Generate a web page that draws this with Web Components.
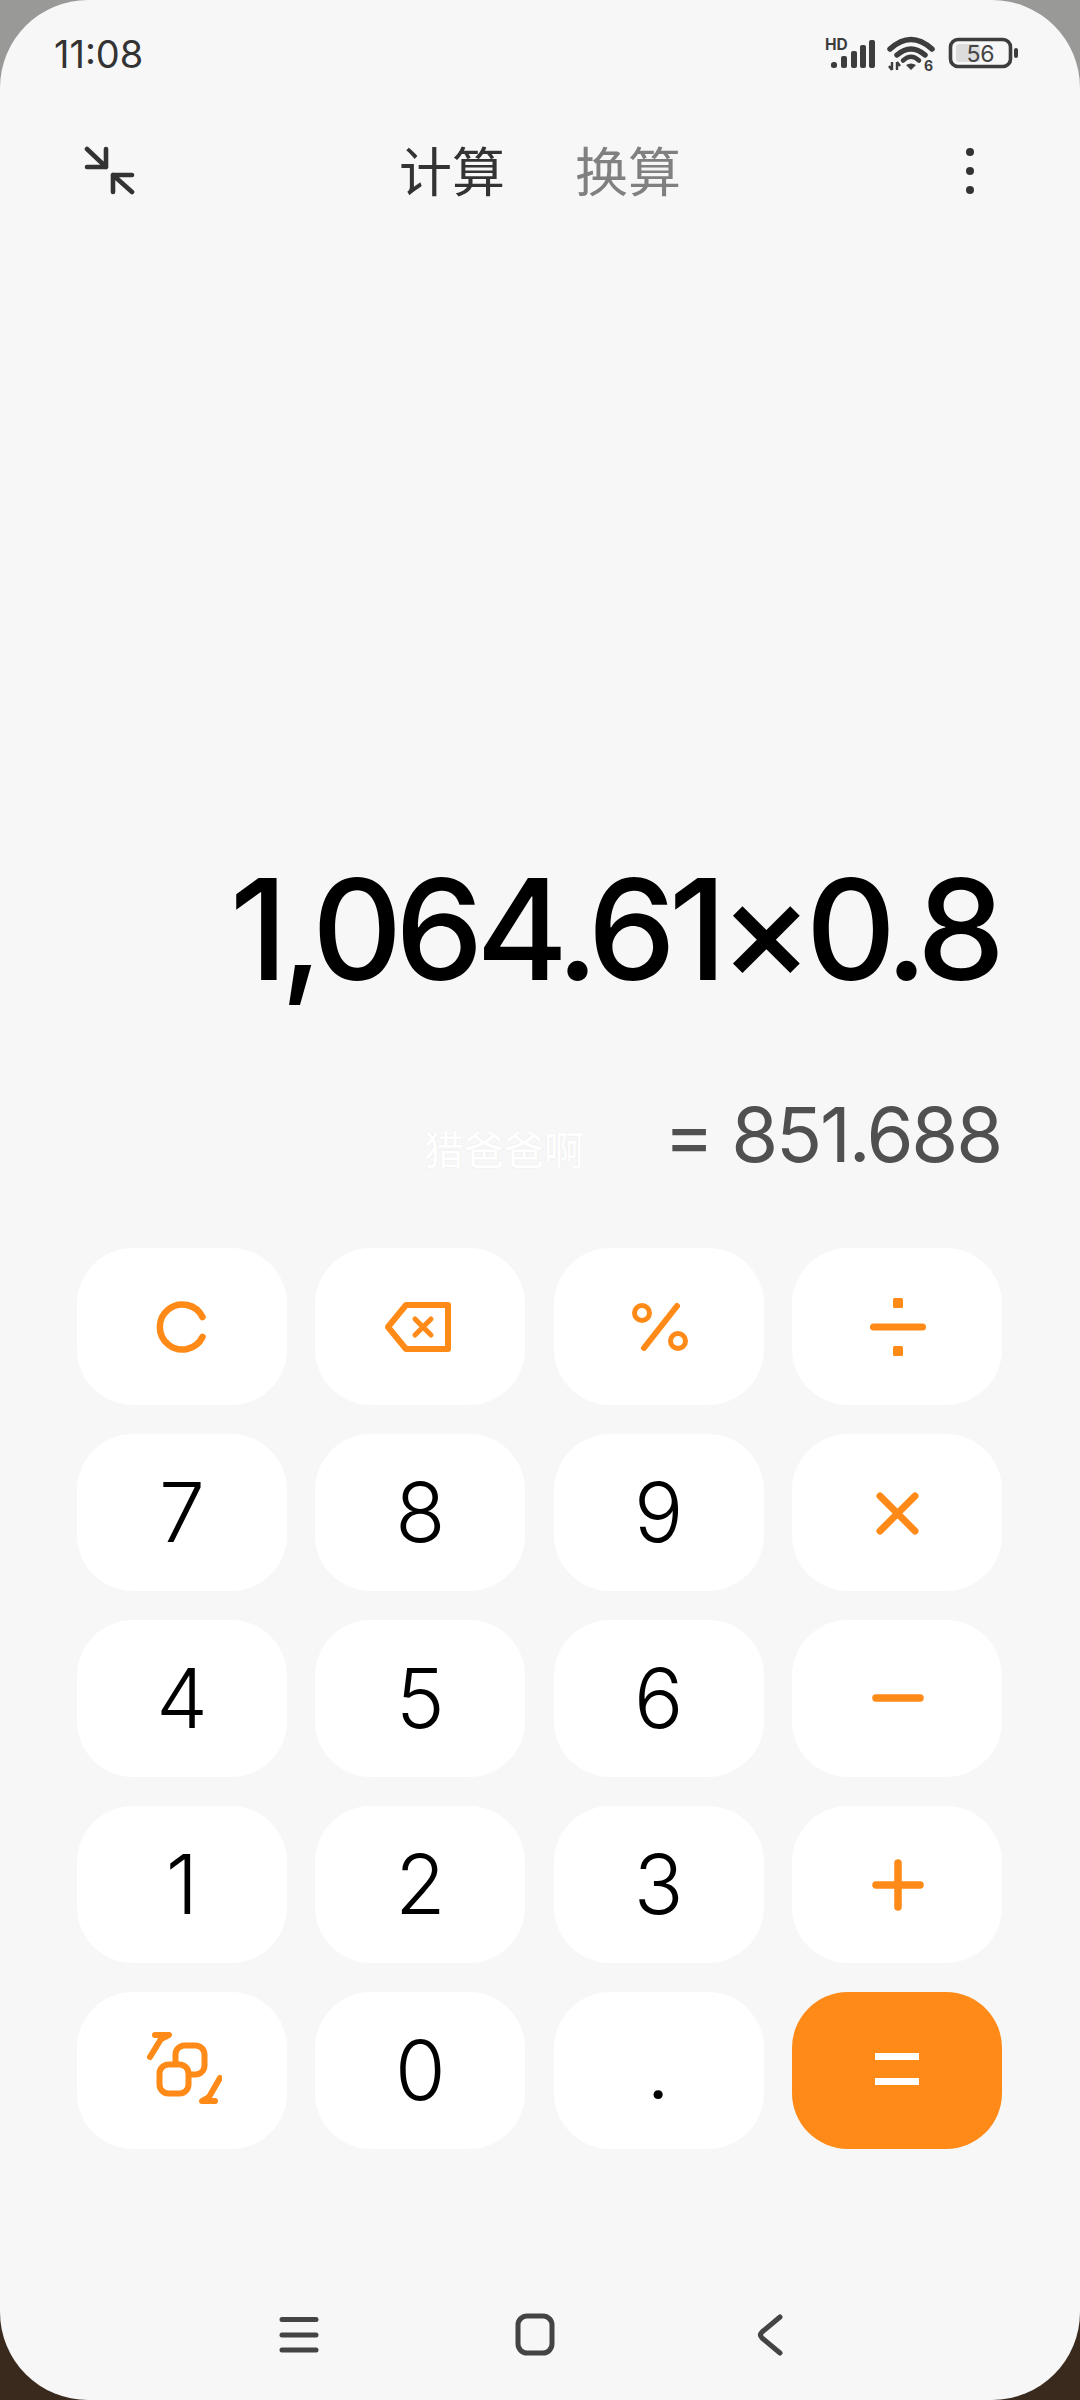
<!DOCTYPE html>
<html lang="zh"><head><meta charset="utf-8">
<style>
html,body{margin:0;padding:0;width:1080px;height:2400px;overflow:hidden;background:linear-gradient(#999a98 0 50%,#3a2a1e 50% 100%);}
</style></head><body>
<phone-frame>
  <status-bar></status-bar>
  <top-bar></top-bar>
  <calc-display expression="1,064.61×0.8" result="= 851.688" mark="猎爸爸啊"></calc-display>
  <key-pad>
    <calc-key tone="op"><svg viewBox="0 0 80 80"><path d="M60.5 30A22.5 22.5 0 1 0 60.5 50" fill="none" stroke="currentColor" stroke-width="6.5" stroke-linecap="round"/></svg></calc-key>
    <calc-key tone="op"><svg viewBox="0 0 80 80"><path d="M68 18H26L8 40L26 62H68Z" fill="none" stroke="currentColor" stroke-width="6" stroke-linejoin="round"/><path d="M35 32L51 48M51 32L35 48" fill="none" stroke="currentColor" stroke-width="5" stroke-linecap="round"/></svg></calc-key>
    <calc-key tone="op"><svg viewBox="0 0 80 80"><circle cx="23" cy="26" r="7.5" fill="none" stroke="currentColor" stroke-width="5"/><circle cx="59" cy="54" r="7.5" fill="none" stroke="currentColor" stroke-width="5"/><path d="M58 19L25 61" fill="none" stroke="currentColor" stroke-width="6" stroke-linecap="round"/></svg></calc-key>
    <calc-key tone="op"><svg viewBox="0 0 80 80"><path d="M16.5 40H65.5" fill="none" stroke="currentColor" stroke-width="7" stroke-linecap="round"/><rect x="36" y="11" width="10" height="10" rx="1.5" fill="currentColor"/><rect x="36" y="59" width="10" height="10" rx="1.5" fill="currentColor"/></svg></calc-key>
    <calc-key>7</calc-key><calc-key>8</calc-key><calc-key>9</calc-key>
    <calc-key tone="op"><svg viewBox="0 0 80 80"><path d="M23 23L58 58M58 23L23 58" fill="none" stroke="currentColor" stroke-width="7" stroke-linecap="round"/></svg></calc-key>
    <calc-key>4</calc-key><calc-key>5</calc-key><calc-key>6</calc-key>
    <calc-key tone="op"><svg viewBox="0 0 80 80"><path d="M19 39H63" fill="none" stroke="currentColor" stroke-width="7.5" stroke-linecap="round"/></svg></calc-key>
    <calc-key>1</calc-key><calc-key>2</calc-key><calc-key>3</calc-key>
    <calc-key tone="op"><svg viewBox="0 0 80 80"><path d="M19 40H63M41 18V62" fill="none" stroke="currentColor" stroke-width="7.5" stroke-linecap="round"/></svg></calc-key>
    <calc-key tone="op"><svg viewBox="0 0 80 80"><g transform="translate(-10 -10)"><rect x="43.5" y="24.5" width="29" height="29" rx="9" fill="none" stroke="currentColor" stroke-width="6"/><rect x="27.5" y="43.5" width="29" height="29" rx="9" fill="#fff" stroke="currentColor" stroke-width="6"/><path d="M18 36L29 18M23 14H37L29 18" fill="none" stroke="currentColor" stroke-width="6" stroke-linecap="round" stroke-linejoin="round"/><path d="M88 57L77 76M83 80H70L77 76" fill="none" stroke="currentColor" stroke-width="6" stroke-linecap="round" stroke-linejoin="round"/></g></svg></calc-key>
    <calc-key>0</calc-key><calc-key dot>.</calc-key>
    <calc-key tone="eq"><svg viewBox="0 0 80 80"><path d="M18 23H62V30H18ZM18 48H62V55H18Z" fill="currentColor" transform="translate(0 -1)"/></svg></calc-key>
  </key-pad>
  <nav-bar></nav-bar>
</phone-frame>
<script>
function def(name,html,init){
  customElements.define(name,class extends HTMLElement{
    connectedCallback(){
      if(this.shadowRoot)return;
      const s=this.attachShadow({mode:'open'});
      s.innerHTML=typeof html==='function'?html(this):html;
      if(init)init(this,s);
    }
  });
}
const FONT='Inter,"Noto Sans CJK SC",sans-serif';
def('phone-frame',`<style>
:host{display:flex;flex-direction:column;width:1080px;height:2400px;background:#f7f7f7;border-radius:88px;overflow:hidden;font-family:${FONT};box-sizing:border-box}
</style><slot></slot>`);
def('status-bar',`<style>
:host{display:flex;align-items:center;justify-content:space-between;height:108px;padding:0 62px 0 54px;box-sizing:border-box;color:#333;flex:none}
.t{font-size:38px;font-weight:400;line-height:108px}
svg{display:block;width:194px;height:40px}
</style><span class="t">11:08</span>
<svg viewBox="824 35 194 40">
<text x="825" y="51" font-family="Inter,sans-serif" font-size="15.5" font-weight="700" fill="#3d3d3d">HD</text>
<g fill="#3d3d3d"><rect x="831" y="63" width="6" height="6" rx="2.5"/><rect x="841" y="57" width="6" height="12" rx="2"/><rect x="851" y="52" width="6" height="17" rx="2"/><rect x="860" y="46" width="6" height="23" rx="2"/><rect x="869" y="41" width="6" height="28" rx="2"/></g>
<g fill="none" stroke="#3d3d3d" stroke-linecap="round"><path d="M890 50Q911 31 932 50" stroke-width="5.5"/><path d="M897 56Q911 44 925 56" stroke-width="5.5"/><path d="M903 61.5Q911 54 919 61.5" stroke-width="4.5"/></g>
<path d="M906 66Q911 63 916 66L911 71Z" fill="#3d3d3d"/>
<path d="M892 63V71M889 67L892 71L892 71M897 63V71M897 63L900 67" fill="none" stroke="#3d3d3d" stroke-width="2.4"/>
<text x="924" y="72" font-family="Inter,sans-serif" font-size="14" font-weight="700" fill="#3d3d3d">6</text>
<rect x="956" y="45" width="24" height="18" rx="3" fill="#dcdcdc"/>
<rect x="950.5" y="40.5" width="60" height="27" rx="7.5" fill="none" stroke="#3d3d3d" stroke-width="3.6"/>
<rect x="1014" y="49" width="4" height="10" rx="2" fill="#3d3d3d"/>
<text x="980.5" y="63" text-anchor="middle" font-family="Inter,sans-serif" font-size="23" fill="#444">56</text>
</svg>`);
def('top-bar',`<style>
:host{display:grid;grid-template-columns:1fr auto 1fr;align-items:center;height:126px;padding:0 104px 0 84px;box-sizing:border-box;color:#333;flex:none}
svg{display:block}
.more{justify-self:end}
.tabs{display:flex;gap:70px;font:400 53px/1 "Noto Sans CJK SC",sans-serif;transform:translateX(10px) translateY(-2px)}
.off{color:#808080}
</style>
<svg width="52" height="50" viewBox="84 146 52 50"><path d="M87 149L106 167M106 149V167H87M132 192L113 175M113 192V175H132" fill="none" stroke="#333" stroke-width="4.6" stroke-linecap="round" stroke-linejoin="round"/></svg>
<div class="tabs"><span>计算</span><span class="off">换算</span></div>
<svg class="more" width="12" height="52" viewBox="0 0 12 52"><circle cx="6" cy="7" r="4" fill="#333"/><circle cx="6" cy="26" r="4" fill="#333"/><circle cx="6" cy="45" r="4" fill="#333"/></svg>`);
def('calc-display',el=>`<style>
:host{display:block;position:relative;flex:1;min-height:0;display:flex;flex-direction:column;justify-content:flex-end;padding:0 82px 68px 0;text-align:right;white-space:nowrap}
.e{font-size:140px;font-weight:450;line-height:170px;color:#000;letter-spacing:-7.2px;margin-bottom:74px}
.r{font-size:76px;font-weight:420;line-height:92px;color:#505050;letter-spacing:-2.2px;margin-right:-3px}
.m{position:absolute;left:424px;bottom:76px;font:400 40px/48px "Noto Sans CJK SC",sans-serif;color:#fff;text-shadow:0 0 2px #e9e9e9}
</style><div class="e">${el.getAttribute('expression')}</div><div class="r">${el.getAttribute('result')}</div><div class="m">${el.getAttribute('mark')}</div>`);
def('key-pad',`<style>
:host{display:grid;grid-template-columns:repeat(4,210px);grid-auto-rows:157px;column-gap:28.3px;row-gap:29px;padding:0 0 0 77px;flex:none}
</style><slot></slot>`);
def('calc-key',el=>`<style>
:host{display:flex;align-items:center;justify-content:center;background:#fff;border-radius:56px;color:#000;font-size:82px;font-weight:350;line-height:1}
:host([tone=op]){color:#ff8a17}
:host([tone=eq]){color:#fff;background:#ff8a17}
:host([dot]){font-family:Roboto,sans-serif;font-weight:400}
::slotted(svg){display:block;width:80px;height:80px}
</style><slot></slot>`);
def('nav-bar',`<style>
:host{display:flex;align-items:flex-start;justify-content:center;height:251px;padding-top:161px;box-sizing:border-box;flex:none}
svg{display:block;width:540px;height:50px}
</style><svg viewBox="270 2310 540 50"><g fill="none" stroke="#444" stroke-linecap="round" stroke-linejoin="round"><path d="M282 2319.5H316M282 2335H316M282 2350H316" stroke-width="5"/><rect x="518" y="2316" width="34" height="37" rx="9" stroke-width="5"/><path d="M780 2317L762 2332Q759 2335 762 2338L780 2353" stroke-width="5"/></g></svg>`);
</script>
</body></html>
